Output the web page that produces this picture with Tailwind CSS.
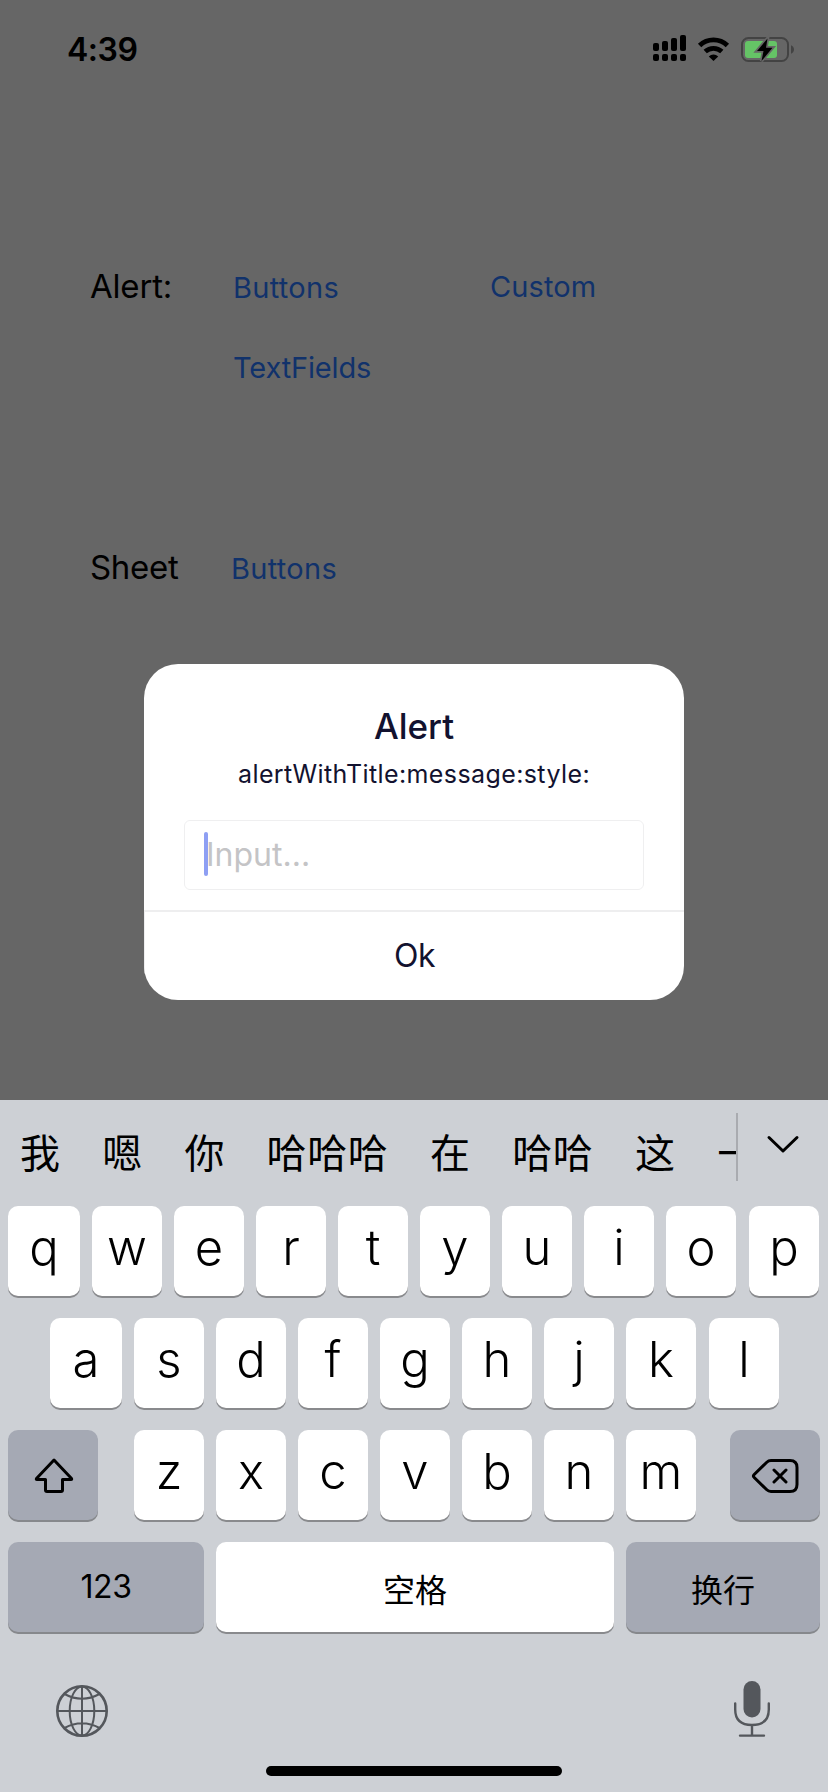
<!DOCTYPE html>
<html lang="zh">
<head>
<meta charset="utf-8">
<title>Alert</title>
<script src="https://cdn.jsdelivr.net/npm/@tailwindcss/browser@4"></script>
</head>
<body class="bg-[#666666]">
<div class="relative flex flex-col w-[828px] h-[1792px] overflow-hidden bg-[#666666] font-['Inter','Noto_Sans_CJK_SC',sans-serif] text-black whitespace-nowrap">

  <!-- Status bar -->
  <header class="flex h-[100px] pl-[67px] pt-[30px] shrink-0">
    <div class="w-[585px] text-[32px] leading-[40px] font-semibold tracking-[-0.5px]">4:39</div>
    <svg class="w-[150px] h-[32px] mt-[2px]" viewBox="652 32 150 32">
      <g fill="#000">
        <rect x="653" y="43" width="6" height="8" rx="2"/><rect x="662" y="41" width="6" height="10" rx="2"/><rect x="671" y="38" width="6" height="13" rx="2"/><rect x="680" y="35" width="6" height="16" rx="2"/>
        <rect x="653" y="54" width="6" height="7" rx="2"/><rect x="662" y="54" width="6" height="7" rx="2"/><rect x="671" y="54" width="6" height="7" rx="2"/><rect x="680" y="54" width="6" height="7" rx="2"/>
        <path d="M713.5 61l-4.700-4.600a7 7 0 0 1 9.400 0z"/>
      </g>
      <path d="M699.600 45.400a20 20 0 0 1 27.800 0M705.200 51.600a12.200 12.200 0 0 1 16.600 0" fill="none" stroke="#000" stroke-width="4.800"/>
      <rect x="742" y="38" width="46" height="23" rx="6.500" fill="none" stroke="#434343" stroke-width="2"/>
      <path d="M791 45.200q3 1.400 3 4.300t-3 4.300z" fill="#434343"/>
      <rect x="745" y="41" width="32" height="17" rx="3" fill="#65c466"/>
      <path d="M767.500 38.500L757 51h6.500L761.500 61L772.500 47.800h-6.500z" fill="#000" stroke="#666" stroke-width="3.400" paint-order="stroke"/>
    </svg>
  </header>

  <!-- Demo page -->
  <main class="flex flex-col h-[1000px] shrink-0 text-[#11326b]">
    <div class="flex pt-[166px] h-[247px]">
      <div class="w-[233px] pl-[90px] text-[33px] leading-[40px] tracking-[-0.2px] text-black">Alert:</div>
      <div class="w-[257px] pt-[2px] text-[29px] leading-[40px] tracking-[0.3px]">Buttons</div>
      <div class="pt-[1px] text-[29px] leading-[40px] tracking-[0.1px]">Custom</div>
    </div>
    <div class="flex h-[200px] pl-[233px] pt-[1px] text-[29px] leading-[40px] tracking-[-0.15px]">TextFields</div>
    <div class="flex">
      <div class="w-[231px] pl-[90px] text-[33px] leading-[40px] tracking-[-0.3px] text-black">Sheet</div>
      <div class="pt-[2px] text-[29px] leading-[40px] tracking-[0.3px]">Buttons</div>
    </div>
  </main>

  <!-- Alert dialog -->
  <section class="absolute left-[144px] top-[664px] w-[540px] h-[336px] rounded-[34px] overflow-hidden bg-white text-[#12122f] flex flex-col items-center">
    <h1 class="mt-[42px] text-[35px] leading-[40px] font-medium">Alert</h1>
    <p class="mt-[8px] text-[25px] leading-[40px] tracking-[0.4px]">alertWithTitle:message:style:</p>
    <div class="mt-[26px] w-[460px] h-[70px] rounded-md border border-[#efeff0] pl-[19px] flex items-center">
      <span class="w-[4px] h-[44px] rounded-[2px] bg-[#8e9ff3] -mt-[2px]"></span>
      <span class="-ml-[2px] text-[32px] leading-[40px] pb-[1px] text-[#c4c4c6]">Input...</span>
    </div>
    <div class="mt-[20px] w-full h-[2px] bg-[#eeeeef]"></div>
    <div class="w-full h-[88px] pt-[24px] border-l border-[#eeeeef] text-center text-[32px] leading-[40px] tracking-[-0.5px]">Ok</div>
  </section>

  <!-- Keyboard -->
  <section class="flex flex-col h-[692px] shrink-0 bg-[#cdd0d5]">
    <div class="flex h-[106px]">
      <div class="flex w-[738px] overflow-hidden pl-[20px] pt-[21px] gap-[41.600px] text-[40px] leading-[60px] tracking-[0.6px] font-['Noto_Sans_CJK_SC',sans-serif]">
        <span>我</span><span>嗯</span><span>你</span><span>哈哈哈</span><span>在</span><span>哈哈</span><span>这</span><span>一</span>
      </div>
      <div class="w-[2px] h-[68px] mt-[13px] -ml-[2px] bg-[#a9abb0]"></div>
      <svg class="w-[34px] h-[20px] mt-[34px] ml-[28px]" viewBox="0 0 34 20" fill="none" stroke="#000" stroke-width="3" stroke-linecap="round" stroke-linejoin="round"><path d="M3 3.500L17 17L31 3.500"/></svg>
    </div>

    <div class="flex h-[112px] pl-[8px] gap-[12px] text-[49px] leading-[83px] font-[350] text-center *:h-[90px] *:w-[70px] *:rounded-[10px] *:bg-white *:shadow-[0_2px_0_#898a8d]">
      <div class="!w-[72px]">q</div><div>w</div><div>e</div><div>r</div><div>t</div><div>y</div><div>u</div><div>i</div><div>o</div><div class="ml-[1px]">p</div>
    </div>
    <div class="flex h-[112px] pl-[50px] gap-[12px] text-[49px] leading-[83px] font-[350] text-center *:h-[90px] *:w-[70px] *:rounded-[10px] *:bg-white *:shadow-[0_2px_0_#898a8d]">
      <div class="!w-[72px]">a</div><div>s</div><div>d</div><div>f</div><div>g</div><div>h</div><div>j</div><div>k</div><div class="ml-[1px]">l</div>
    </div>
    <div class="flex h-[112px] pl-[8px]">
      <div class="w-[90px] h-[90px] rounded-[10px] bg-[#a5a9b4] shadow-[0_2px_0_#86888c]">
        <svg class="w-[90px] h-[90px]" viewBox="8 1430 90 90" fill="none" stroke="#000" stroke-width="3" stroke-linejoin="round"><path d="M54 1460L36.500 1478.500q-.6 1 .5 1h8.500v10.500q0 1.500 1.500 1.500h14q1.500 0 1.500-1.500v-10.500h8.500q1.100 0 .5-1z"/></svg>
      </div>
      <div class="flex ml-[36px] gap-[12px] text-[49px] leading-[83px] font-[350] text-center *:h-[90px] *:w-[70px] *:rounded-[10px] *:bg-white *:shadow-[0_2px_0_#898a8d]">
        <div>z</div><div>x</div><div>c</div><div>v</div><div>b</div><div>n</div><div>m</div>
      </div>
      <div class="ml-[34px] w-[90px] h-[90px] rounded-[10px] bg-[#a5a9b4] shadow-[0_2px_0_#86888c]">
        <svg class="w-[90px] h-[90px]" viewBox="730 1430 90 90" fill="none" stroke="#000" stroke-width="3" stroke-linecap="round" stroke-linejoin="round"><path d="M771 1460.500h19q7 0 7 7v17q0 7-7 7h-19q-2.500 0-4.200-1.700l-12.600-12.300q-1.500-1.500 0-3l12.600-12.300q1.700-1.700 4.200-1.700zM774 1470l12 12M786 1470l-12 12"/></svg>
      </div>
    </div>
    <div class="flex h-[122px] pl-[8px] gap-[12px] text-[32px] text-center *:h-[90px] *:rounded-[10px]">
      <div class="w-[196px] bg-[#a5a9b4] shadow-[0_2px_0_#86888c] leading-[90px] tracking-[-0.4px]">123</div>
      <div class="w-[398px] bg-white shadow-[0_2px_0_#898a8d] leading-[92px] font-['Noto_Sans_CJK_SC',sans-serif]">空格</div>
      <div class="w-[194px] bg-[#a5a9b4] shadow-[0_2px_0_#86888c] leading-[92px] font-['Noto_Sans_CJK_SC',sans-serif]">换行</div>
    </div>
    <div class="flex justify-between h-[102px] pl-[54px] pr-[56px]">
      <svg class="w-[56px] h-[56px] mt-[19px]" viewBox="-28 -28 56 56" fill="none" stroke="#54575c" stroke-width="2"><circle r="24.700" stroke-width="2.600"/><path d="M0-25V25M-25 0H25M-17.500-17Q0-7.500 17.500-17M-17.500 17Q0 7.500 17.500 17"/><ellipse rx="12.300" ry="24.500"/></svg>
      <svg class="w-[40px] h-[60px] mt-[15px]" viewBox="732 1679 40 60" fill="none" stroke="#54575c" stroke-width="2.400" stroke-linecap="round"><rect x="743.500" y="1681" width="17" height="36.500" rx="8.500" fill="#54575c" stroke="none"/><path d="M735.200 1703.500v6q0 15.500 16.800 15.500t16.800-15.500v-6M752 1725v10M740 1735.600h24"/></svg>
    </div>
    <div class="mx-auto w-[296px] h-[10px] rounded-full bg-black"></div>
  </section>
</div>
</body>
</html>
